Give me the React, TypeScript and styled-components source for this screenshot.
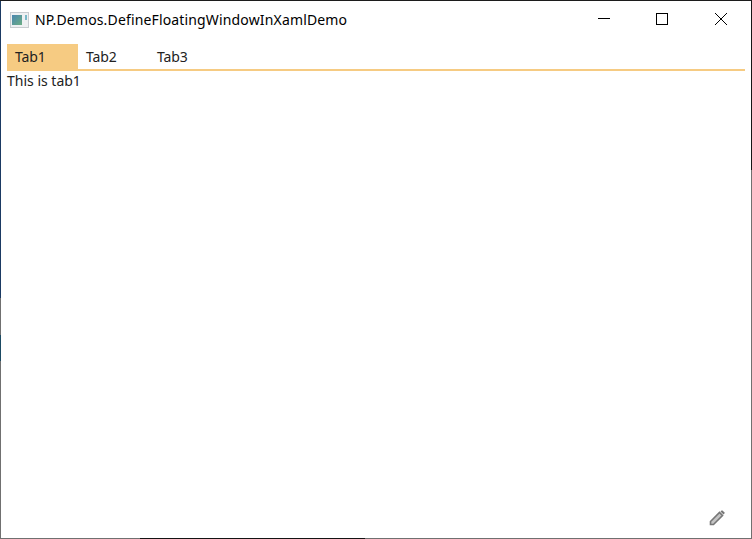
import React from 'react';
import styled, { createGlobalStyle } from 'styled-components';

const GlobalStyle = createGlobalStyle`
  html, body {
    margin: 0;
    padding: 0;
    height: 100%;
    background: #fff;
  }
  #root {
    height: 100%;
  }
`;

// the 1px window edge picks up the desktop behind it, so it changes colour along its length
const Page = styled.div`
  width: 752px;
  height: 539px;
  box-sizing: border-box;
  padding: 1px;
  display: flex;
  flex-direction: column;
  overflow: hidden;
  background-color: #fff;
  background-repeat: no-repeat;
  background-image:
    linear-gradient(#1c1c1c, #1c1c1c),
    linear-gradient(#1b3a63 298px, #707070 298px, #707070 335px, #1b4a63 335px, #1b4a63 361px, #707070 361px),
    linear-gradient(#161616 170px, #707070 170px),
    linear-gradient(90deg, #707070 140px, #141414 140px, #141414 365px, #707070 365px);
  background-size: 100% 1px, 1px 100%, 1px 100%, 100% 1px;
  background-position: 0 0, 0 0, 100% 0, 0 100%;
`;

const WindowBody = styled.div`
  flex: 1;
  min-height: 0;
  display: flex;
  flex-direction: column;
  background: #fff;
  font-family: "Noto Sans", "Open Sans", sans-serif;
  color: #222;
`;

const TitleBar = styled.div`
  height: 37px;
  flex: none;
  display: flex;
  align-items: center;
`;

const AppIcon = styled.svg`
  width: 20px;
  height: 16px;
  flex: none;
  margin: 0 5px 0 9px;
`;

const TitleText = styled.div`
  font-size: 14px;
  letter-spacing: 0.15px;
  color: #000;
  flex: 1;
  white-space: nowrap;
`;

const CaptionButton = styled.div`
  width: 59px;
  height: 37px;
  box-sizing: border-box;
  padding: 12px 0 0 23px;
  display: flex;
  align-items: flex-start;
`;

const TabStrip = styled.div`
  display: flex;
  height: 25px;
  margin: 6px 6px 0 6px;
  border-bottom: 2px solid #f6cb82;
  flex: none;
`;

const Tab = styled.div<{ $active?: boolean }>`
  width: 71px;
  box-sizing: border-box;
  padding-left: 8px;
  font-size: 14px;
  line-height: 25px;
  letter-spacing: -0.1px;
  background: ${(p) => (p.$active ? '#f6cb82' : 'transparent')};
`;

const TabBody = styled.div`
  flex: 1;
  min-height: 0;
  position: relative;
  padding-left: 6px;
  font-size: 14px;
  line-height: 20px;
`;

const EditButton = styled.div`
  position: absolute;
  right: 26px;
  bottom: 12px;
  width: 16px;
  height: 16px;
  display: flex;
`;

export default function App() {
  return (
    <Page>
      <GlobalStyle />
      <WindowBody>
        <TitleBar>
          <AppIcon viewBox="0 0 20 16">
            <defs>
              <linearGradient id="appIconFill" x1="0" y1="0" x2="1" y2="1">
                <stop offset="0" stopColor="#4a86b0" />
                <stop offset="1" stopColor="#6cae84" />
              </linearGradient>
            </defs>
            <rect x="0.5" y="0.5" width="18" height="15" fill="#eef0f2" stroke="#c8ccd0" />
            <rect x="2" y="3" width="10" height="10" fill="url(#appIconFill)" />
            <rect x="15" y="3" width="2" height="5" fill="#7ab8c8" />
          </AppIcon>
          <TitleText>NP.Demos.DefineFloatingWindowInXamlDemo</TitleText>
          <CaptionButton>
            <svg width="13" height="12" viewBox="0 0 13 12">
              <path d="M1 5.5H13" stroke="#000" fill="none" />
            </svg>
          </CaptionButton>
          <CaptionButton>
            <svg width="12" height="12" viewBox="0 0 12 12">
              <rect x="0.5" y="0.5" width="11" height="11" stroke="#000" fill="none" />
            </svg>
          </CaptionButton>
          <CaptionButton>
            <svg width="12" height="12" viewBox="0 0 12 12">
              <path d="M0 0L12 12M12 0L0 12" stroke="#000" fill="none" />
            </svg>
          </CaptionButton>
        </TitleBar>
        <TabStrip>
          <Tab $active>Tab1</Tab>
          <Tab>Tab2</Tab>
          <Tab>Tab3</Tab>
        </TabStrip>
        <TabBody>
          This is tab1
          <EditButton>
            <svg width="16" height="16" viewBox="0 0 16 16">
              <path d="M1.5 14.5V11.5L10.5 2.5L13.5 5.5L4.5 14.5Z" fill="#c4c4c4" stroke="#777" strokeWidth="1.6" />
              <path d="M11.5 1.5L12.5 0.5H13.5L15.5 2.5V3.5L14.5 4.5Z" fill="#777" />
            </svg>
          </EditButton>
        </TabBody>
      </WindowBody>
    </Page>
  );
}
